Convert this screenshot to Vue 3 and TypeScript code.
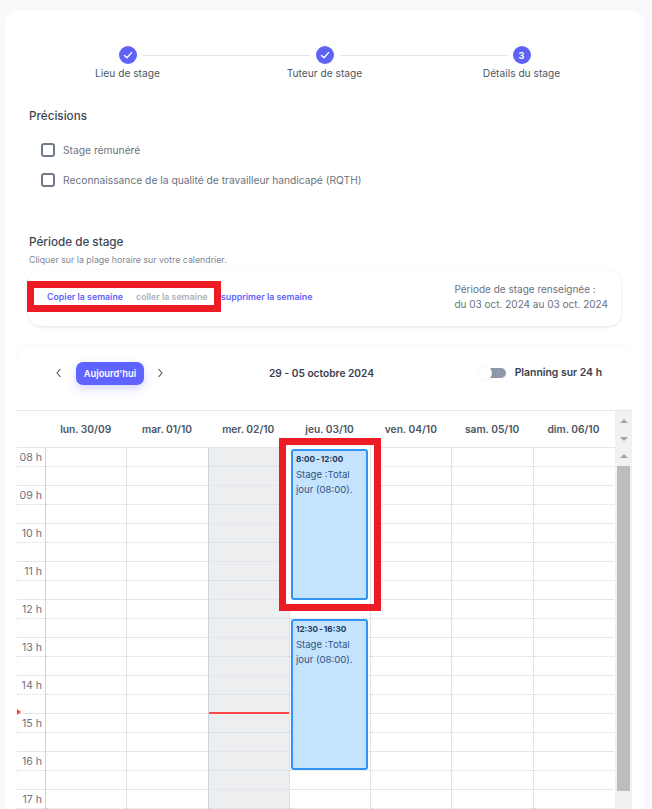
<script setup lang="ts">
const steps = [
  { label: 'Lieu de stage', done: true, n: 1 },
  { label: 'Tuteur de stage', done: true, n: 2 },
  { label: 'Détails du stage', done: false, n: 3 },
]
const checks = ['Stage rémunéré', 'Reconnaissance de la qualité de travailleur handicapé (RQTH)']
const days = ['lun. 30/09', 'mar. 01/10', 'mer. 02/10', 'jeu. 03/10', 'ven. 04/10', 'sam. 05/10', 'dim. 06/10']
const hours = ['08 h', '09 h', '10 h', '11 h', '12 h', '13 h', '14 h', '15 h', '16 h', '17 h']
</script>

<template>
  <div class="page">
    <main class="card">
      <ol class="stepper">
        <li v-for="(s, i) in steps" :key="s.label" class="step">
          <div class="step-track">
            <span class="line" :class="{ hidden: i === 0 }"></span>
            <span class="dot">
              <svg v-if="s.done" width="10" height="10" viewBox="0 0 10 10">
                <path d="M1.5 5.4 L4 7.8 L8.6 2.6" fill="none" stroke="#fff" stroke-width="1.4" stroke-linecap="round" stroke-linejoin="round" />
              </svg>
              <template v-else>{{ s.n }}</template>
            </span>
            <span class="line" :class="{ hidden: i === 2 }"></span>
          </div>
          <span class="step-label">{{ s.label }}</span>
        </li>
      </ol>

      <section class="section">
        <h2 class="heading">Précisions</h2>
        <label v-for="c in checks" :key="c" class="check">
          <span class="box"></span>
          <span>{{ c }}</span>
        </label>
      </section>

      <section class="section period">
        <h2 class="heading">Période de stage</h2>
        <p class="hint">Cliquer sur la plage horaire sur votre calendrier.</p>
        <div class="actions">
          <div class="week-actions">
            <div class="marked">
              <a class="link copy">Copier la semaine</a>
              <a class="link paste">coller la semaine</a>
            </div>
            <a class="link remove">supprimer la semaine</a>
          </div>
          <p class="summary">Période de stage renseignée :<br />du 03 oct. 2024 au 03 oct. 2024</p>
        </div>
      </section>

      <section class="calendar">
        <header class="toolbar">
          <div class="nav">
            <svg class="prev" width="8" height="10" viewBox="0 0 8 10"><path d="M5.5 1 L2 5 L5.5 9" fill="none" stroke="#4b5563" stroke-width="1.1" /></svg>
            <button class="today">Aujourd'hui</button>
            <svg width="8" height="10" viewBox="0 0 8 10"><path d="M2.5 1 L6 5 L2.5 9" fill="none" stroke="#4b5563" stroke-width="1.1" /></svg>
          </div>
          <strong class="range">29 - 05 octobre 2024</strong>
          <div class="toggle-wrap">
            <span class="toggle"><span class="knob"></span></span>
            <strong>Planning sur 24 h</strong>
          </div>
        </header>

        <div class="head-row">
          <div class="gutter-head"></div>
          <div v-for="d in days" :key="d" class="day-head">{{ d }}</div>
          <div class="scrollbar head-scroll">
            <i class="arrow up"></i>
            <i class="arrow down"></i>
          </div>
        </div>

        <div class="body-row">
          <div class="gutter">
            <div v-for="h in hours" :key="h" class="slot">
              <span class="half"><span class="hour">{{ h }}</span></span>
              <span class="half"></span>
            </div>
            <i class="now-mark"></i>
          </div>
          <div v-for="(d, i) in days" :key="d" class="day" :class="{ off: i === 2 }">
            <div v-for="h in hours" :key="h" class="slot">
              <span class="half"></span>
              <span class="half"></span>
            </div>
            <i v-if="i === 2" class="now-line"></i>
            <template v-if="i === 3">
              <div class="red-frame"></div>
              <article class="event first">
                <b>8:00 - 12:00</b>
                <p>Stage :Total jour (08:00).</p>
              </article>
              <article class="event second">
                <b>12:30 - 16:30</b>
                <p>Stage :Total jour (08:00).</p>
              </article>
            </template>
          </div>
          <div class="scrollbar body-scroll">
            <i class="arrow up"></i>
            <div class="thumb"></div>
          </div>
        </div>
      </section>
    </main>
  </div>
</template>

<style>
html, body { margin: 0; background: #f8f9fb; }
</style>

<style scoped>
.page {
  height: 809px;
  overflow: hidden;
  box-sizing: border-box;
  padding: 11px 8px 0 5px;
  background: #f8f9fb;
  font-family: Inter, "Liberation Sans", sans-serif;
  color: #4b5563;
}
.card {
  background: #fff;
  border-radius: 13px 13px 0 0;
  padding-top: 35px;
  height: 798px;
  box-sizing: border-box;
}
.stepper {
  display: grid;
  grid-template-columns: repeat(3, 1fr);
  margin: 0;
  padding: 0 24px;
  list-style: none;
}
.step {
  display: flex;
  flex-direction: column;
  align-items: center;
}
.step-track {
  width: 100%;
  display: flex;
  align-items: center;
}
.line { flex: 1; height: 1px; background: #e3e5e8; }
.line.hidden { background: transparent; }
.dot {
  width: 18px;
  height: 18px;
  margin: 0 6px;
  border-radius: 50%;
  background: #5f63f5;
  color: #fff;
  font-size: 9px;
  font-weight: 700;
  display: flex;
  align-items: center;
  justify-content: center;
}
.step-label {
  margin-top: 2px;
  font-size: 10.2px;
  line-height: 14px;
  color: #4b5563;
}
.section { padding: 0 24px; }
.heading {
  margin: 0;
  font-size: 11.7px;
  line-height: 16px;
  font-weight: 500;
  color: #3f4654;
}
.section:not(.period) { margin-top: 28px; }
.section:not(.period) .heading { margin-bottom: 19px; }
.check {
  display: flex;
  align-items: center;
  gap: 8px;
  height: 14px;
  margin: 0 0 16px 12px;
  font-size: 10.25px;
  color: #6b7280;
}
.box {
  width: 10px;
  height: 10px;
  border: 2px solid #6e7c8c;
  border-radius: 3px;
}
.period { margin-top: 47px; padding-right: 23px; }
.hint {
  margin: 4px 0 0;
  font-size: 8.8px;
  line-height: 12px;
  color: #7f8896;
}
.actions {
  display: flex;
  justify-content: space-between;
  align-items: center;
  height: 56px;
  margin: 4px 0 0 -1px;
  border-radius: 13px;
  box-shadow: 0 1px 3px rgba(60, 70, 90, 0.16);
}
.week-actions { display: flex; align-items: center; margin-top: -4px; }
.marked {
  display: flex;
  box-sizing: border-box;
  width: 194px;
  height: 31px;
  align-items: center;
  gap: 13px;
  padding-left: 13px;
  background: #fff;
  border: 7px solid #ed1c24;
  position: relative;
  left: -1px;
}
.link {
  font-size: 8.8px;
  font-weight: 600;
  color: #5f63ff;
  white-space: nowrap;
}
.paste { color: #adb3bd; }
.remove { margin-left: -1px; }
.summary {
  margin: -2px 0 0;
  padding-right: 13px;
  font-size: 10px;
  line-height: 15px;
  color: #6b7280;
}
.calendar {
  margin: 20px 12px 0;
  border-radius: 13px 13px 0 0;
  box-shadow: 0 -1px 3px rgba(60, 70, 90, 0.05);
}
.toolbar {
  height: 65px;
  position: relative;
  display: grid;
  grid-template-columns: 1fr auto 1fr;
  align-items: center;
  border-bottom: 1px solid #e5e7ea;
  box-sizing: border-box;
}
.nav {
  display: flex;
  align-items: center;
  gap: 12px;
  padding-left: 38px;
  padding-bottom: 10px;
}
.prev { margin-right: 1px; }
.today {
  width: 68px;
  height: 23px;
  border: 0;
  padding: 0;
  border-radius: 7px;
  background: #5f63ff;
  color: #fff;
  font: 600 9.3px Inter, "Liberation Sans", sans-serif;
  box-shadow: 0 4px 10px rgba(95, 99, 255, 0.25);
}
.range {
  font-size: 10.2px;
  font-weight: 600;
  color: #3a404c;
  padding: 0 6px 10px 0;
}
.toggle-wrap {
  display: flex;
  justify-content: flex-end;
  align-items: center;
  gap: 9px;
  padding-right: 30px;
  padding-bottom: 11px;
  font-size: 10.4px;
  color: #3a404c;
}
.toggle-wrap strong { font-weight: 600; }
.toggle {
  position: relative;
  width: 16px;
  height: 10px;
  margin-left: 12px;
  border-radius: 0 5px 5px 0;
  background: #8d98a8;
}
.knob {
  position: absolute;
  left: -12px;
  top: -2px;
  width: 14px;
  height: 14px;
  border-radius: 50%;
  background: #fff;
  box-shadow: 0 0 2px rgba(60, 70, 90, 0.15);
}
.head-row {
  display: grid;
  grid-template-columns: 28px repeat(7, 81.3px) 1fr;
  height: 37px;
  box-sizing: border-box;
  border-bottom: 1px solid #e5e7ea;
}
.day-head {
  display: flex;
  align-items: center;
  justify-content: center;
  font-size: 10.2px;
  font-weight: 600;
  color: #4b5563;
}
.scrollbar {
  background: #f1f1f1;
  position: relative;
}
.head-scroll { margin-left: 1px; margin-bottom: -1px; }
.arrow {
  position: absolute;
  left: 5px;
  width: 0;
  height: 0;
  border-left: 4px solid transparent;
  border-right: 4px solid transparent;
}
.arrow.up { border-bottom: 4px solid #a3a3a3; }
.arrow.down { border-top: 4px solid #a3a3a3; }
.head-scroll .up { top: 8px; }
.head-scroll .down { top: 26px; }
.body-row {
  display: grid;
  grid-template-columns: 28px repeat(7, 81.3px) 1fr;
  height: 362px;
  overflow: visible;
}
.gutter, .day { position: relative; }
.day, .gutter + .day { border-left: 1px solid #dfe1e5; }
.gutter + .day { border-left-color: #cfd2d8; }
.day.off { background: #edeef0; border-left-color: #cfd2d8; }
.slot { height: 38px; display: flex; flex-direction: column; }
.half {
  height: 19px;
  box-sizing: border-box;
  border-bottom: 1px dotted #d5d8dd;
  display: block;
}
.half + .half { border-bottom: 1px solid #e3e5e8; }
.hour {
  display: block;
  padding: 3px 3px 0 0;
  text-align: right;
  font-size: 10.6px;
  line-height: 14px;
  color: #6b7280;
}
.now-mark {
  position: absolute;
  left: 0;
  top: 261px;
  border-left: 4px solid #ff3b3b;
  border-top: 3px solid transparent;
  border-bottom: 3px solid transparent;
}
.now-line {
  position: absolute;
  z-index: 1;
  left: 0;
  right: 0;
  top: 264px;
  height: 2px;
  background: #f9474a;
}
.event {
  position: absolute;
  z-index: 3;
  left: 1px;
  width: 77px;
  height: 151px;
  box-sizing: border-box;
  padding: 3px 3px;
  background: #c5e3fd;
  border: 2px solid #3193f5;
  border-radius: 3px;
  color: #2f5585;
}
.event.first { top: 1px; }
.event.second { top: 171px; }
.event b {
  display: block;
  font-size: 8.2px;
  line-height: 11px;
  font-weight: 700;
  word-spacing: -1px;
  color: #1f3a5f;
}
.event p {
  margin: 2px 0 0;
  font-size: 9.6px;
  line-height: 15px;
}
.red-frame {
  position: absolute;
  z-index: 2;
  left: -11px;
  top: -10px;
  width: 102px;
  height: 173px;
  box-sizing: border-box;
  border: 7px solid #ed1c24;
  background: #fff;
}
.red-frame::after {
  content: "";
  position: absolute;
  left: 84px;
  top: 0;
  bottom: 0;
  width: 1px;
  background: #dfe1e5;
}
.body-scroll { margin-left: 1px; }
.body-scroll .up { top: 6px; }
.thumb {
  position: absolute;
  top: 18px;
  left: 2px;
  right: 2px;
  height: 325px;
  background: #bdbdbd;
}
</style>
